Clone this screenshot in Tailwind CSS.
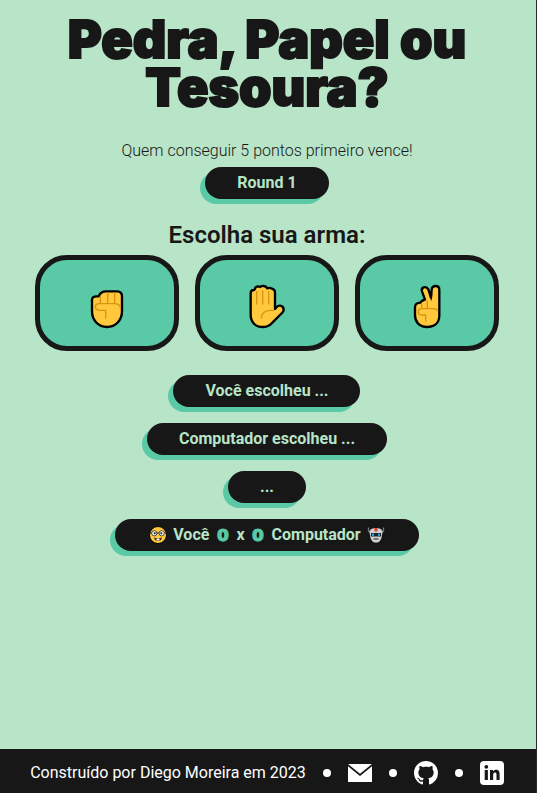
<!DOCTYPE html>
<html lang="pt-BR">
<head>
<meta charset="utf-8">
<meta name="viewport" content="width=device-width, initial-scale=1">
<title>Pedra, Papel ou Tesoura?</title>
<script src="https://cdn.jsdelivr.net/npm/@tailwindcss/browser@4"></script>
</head>
<body class="flex min-h-screen flex-col border-r border-[#2b2b2b] bg-[#b8e4c8] font-[Roboto,sans-serif] text-base text-[#171717]">
<main class="flex flex-1 flex-col items-center pt-4 pr-0.5 text-center">
  <h1 class="max-w-[440px] font-[Inter,sans-serif] text-[52px] leading-12 font-black [-webkit-text-stroke:2px_#171717]">Pedra, Papel ou Tesoura?</h1>
  <p class="mt-[27px] leading-6 font-light">Quem conseguir 5 pontos primeiro vence!</p>
  <p class="mt-1 rounded-2xl bg-[#171717] px-8 py-1 font-bold text-[#b8e4c8] shadow-[-5px_5px_0_#5ac9a6]">Round 1</p>
  <h2 class="mt-5 text-2xl leading-8 font-semibold">Escolha sua arma:</h2>
  <div class="mt-1 flex gap-4">
    <button type="button" aria-label="Pedra" class="flex h-24 w-36 items-center justify-center rounded-4xl border-5 border-[#171717] bg-[#5ac9a6] pt-1">
      <svg class="h-12 w-[42px]" viewBox="198 108 126 144" fill="none" stroke-linecap="round" stroke-linejoin="round">
        <path d="M216 164Q217 154 229 154H236Q239 145 246 142Q249 139 258 139H292Q306 140 306 154V198C306 226 287 246 261 246S216 226 216 198Z" fill="#ffc83d" stroke="#000" stroke-width="7"/>
        <path d="M241 155V175M263 144V175M284 144V175M302 189Q299 176 284 176H236Q226 177 226 185Q227 195 237 196H257V219" stroke="#d9930e" stroke-width="4"/>
      </svg>
    </button>
    <button type="button" aria-label="Papel" class="flex h-24 w-36 items-center justify-center rounded-4xl border-5 border-[#171717] bg-[#5ac9a6] pt-1">
      <svg class="h-12 w-[42px]" viewBox="168 108 126 144" fill="none" stroke-linecap="round" stroke-linejoin="round">
        <path d="M182 144Q183 135 191 135Q195 134 195 131Q197 124 204 124Q210 125 211 126Q215 122 221 123Q228 123 232 130Q239 127 246 131Q255 134 255 142V192L260 186Q264 181 271 182Q281 184 281 194Q281 199 276 204L247 233Q235 246 218 246C195 246 182 230 182 209Z" fill="#ffc83d" stroke="#000" stroke-width="7"/>
        <path d="M200 140V177M218 137V177M236 140V177M251 196H240Q216 197 214 219" stroke="#d9930e" stroke-width="4"/>
      </svg>
    </button>
    <button type="button" aria-label="Tesoura" class="flex h-24 w-36 items-center justify-center rounded-4xl border-5 border-[#171717] bg-[#5ac9a6] pt-1">
      <svg class="h-12 w-[42px]" viewBox="168 108 126 144" fill="none" stroke-linecap="round" stroke-linejoin="round">
        <path d="M195 187Q195 174 211 173Q214 167 222 165L225 164L216 139Q213 130 221 127Q230 124 235 133L243 157L245 134Q246 123 257 123Q268 123 268 134V211C268 233 254 246 231 246S195 231 195 211Z" fill="#ffc83d" stroke="#000" stroke-width="7"/>
        <path d="M236 148L244 169L247 146Z" fill="#000"/>
        <path d="M215 177V190M232 169V190M263 197Q260 191 251 191H214Q205 192 205 200Q205 209 215 210H227V227" stroke="#d9930e" stroke-width="4"/>
      </svg>
    </button>
  </div>
  <div class="mt-6 flex flex-col items-center gap-4 font-bold text-[#b8e4c8]">
    <p class="rounded-2xl bg-[#171717] px-8 py-1 shadow-[-5px_5px_0_#5ac9a6]">Você escolheu ...</p>
    <p class="rounded-2xl bg-[#171717] px-8 py-1 shadow-[-5px_5px_0_#5ac9a6]">Computador escolheu ...</p>
    <p class="rounded-2xl bg-[#171717] px-8 py-1 shadow-[-5px_5px_0_#5ac9a6]">...</p>
    <div class="flex items-center gap-2 rounded-2xl bg-[#171717] px-8 py-1 shadow-[-5px_5px_0_#5ac9a6]">
      <span class="flex items-center gap-1">
        <svg class="h-5 w-[22px]" viewBox="0 0 22 20" aria-hidden="true">
          <circle cx="11" cy="10" r="8.500" fill="#ffc83d" stroke="#000"/>
          <path d="M2.500 8H19.500" stroke="#222"/>
          <circle cx="7.300" cy="8.300" r="2.600" fill="#fff" stroke="#222" stroke-width=".8"/>
          <circle cx="14.700" cy="8.300" r="2.600" fill="#fff" stroke="#222" stroke-width=".8"/>
          <circle cx="7.700" cy="8.300" r="1.100" fill="#222"/><circle cx="14.300" cy="8.300" r="1.100" fill="#222"/>
          <path d="M7 12.500Q11 14 15 12.500Q14.500 16 11 16T7 12.500" fill="#4a2b10"/>
          <path d="M9.500 13.500h3v2h-3z" fill="#fff"/>
        </svg>
        <span>Você</span>
      </span>
      <span class="flex w-[11px] justify-center font-[Inter,sans-serif] font-black text-[#5ac9a6] [-webkit-text-stroke:1px_#5ac9a6]">0</span>
      <span>x</span>
      <span class="flex w-[11px] justify-center font-[Inter,sans-serif] font-black text-[#5ac9a6] [-webkit-text-stroke:1px_#5ac9a6]">0</span>
      <span class="flex items-center gap-1">
        <span>Computador</span>
        <svg class="h-5 w-[22px]" viewBox="0 0 22 20" aria-hidden="true">
          <path d="M3.500 2.500V6L6 9M18.500 2.500V6L16 9" fill="none" stroke="#777" stroke-width="1.300"/>
          <path d="M4.500 6Q6 3 11 3T17.500 6L16.500 13Q15.500 16 13 17.500H9Q6.500 16 5.500 13Z" fill="#d0d0d0"/>
          <path d="M9.500 3h3v3.500h-3z" fill="#e83b2e"/>
          <path d="M6 8H16V11.500H6Z" fill="#222"/>
          <circle cx="8" cy="9.700" r="1.200" fill="#20a8ee"/><circle cx="14" cy="9.700" r="1.200" fill="#20a8ee"/>
          <path d="M8.500 14h5" stroke="#444" stroke-width="1.300"/>
        </svg>
      </span>
    </div>
  </div>
</main>
<footer class="flex h-11 items-center justify-center gap-[17px] bg-[#171717] pt-1 pr-0.5 text-white">
  <p>Construído por Diego Moreira em 2023</p>
  <span class="size-2 rounded-full bg-white"></span>
  <a href="#" aria-label="E-mail">
    <svg class="size-6" viewBox="0 0 24 24" fill="#fff"><path d="M0 3H24L12 12.700ZM0 5.200L12 14.900L24 5.200V21H0Z"/></svg>
  </a>
  <span class="size-2 rounded-full bg-white"></span>
  <a href="#" aria-label="GitHub">
    <svg class="size-6" viewBox="0 0 24 24" fill="#fff"><path d="M12 0C5.370 0 0 5.370 0 12c0 5.310 3.435 9.795 8.205 11.385.6.105.825-.255.825-.57 0-.285-.015-1.230-.015-2.235-3.015.555-3.795-.735-4.035-1.410-.135-.345-.72-1.410-1.230-1.695-.42-.225-1.020-.78-.015-.795.945-.015 1.620.87 1.845 1.230 1.080 1.815 2.805 1.305 3.495.99.105-.78.42-1.305.765-1.605-2.670-.3-5.460-1.335-5.460-5.925 0-1.305.465-2.385 1.230-3.225-.12-.3-.54-1.530.12-3.180 0 0 1.005-.315 3.300 1.230.96-.27 1.980-.405 3-.405s2.040.135 3 .405c2.295-1.560 3.300-1.230 3.300-1.230.66 1.650.24 2.880.12 3.180.765.84 1.230 1.905 1.230 3.225 0 4.605-2.805 5.625-5.475 5.925.435.375.81 1.095.81 2.220 0 1.605-.015 2.895-.015 3.300 0 .315.225.69.825.57A12.020 12.020 0 0 0 24 12c0-6.630-5.370-12-12-12z"/></svg>
  </a>
  <span class="size-2 rounded-full bg-white"></span>
  <a href="#" aria-label="LinkedIn">
    <svg class="size-6" viewBox="0 0 24 24"><rect width="24" height="24" rx="4" fill="#fff"/><circle cx="6.300" cy="5.800" r="1.900" fill="#171717"/><path d="M4.700 9H7.900V19H4.700ZM10 9H13V10.400C13.700 9.300 14.700 8.700 16 8.700C18.900 8.700 19.600 10.700 19.600 13.300V19H16.500V14C16.500 12.700 16.400 11.400 15 11.400S13.200 12.500 13.200 14V19H10Z" fill="#171717"/></svg>
  </a>
</footer>
</body>
</html>
